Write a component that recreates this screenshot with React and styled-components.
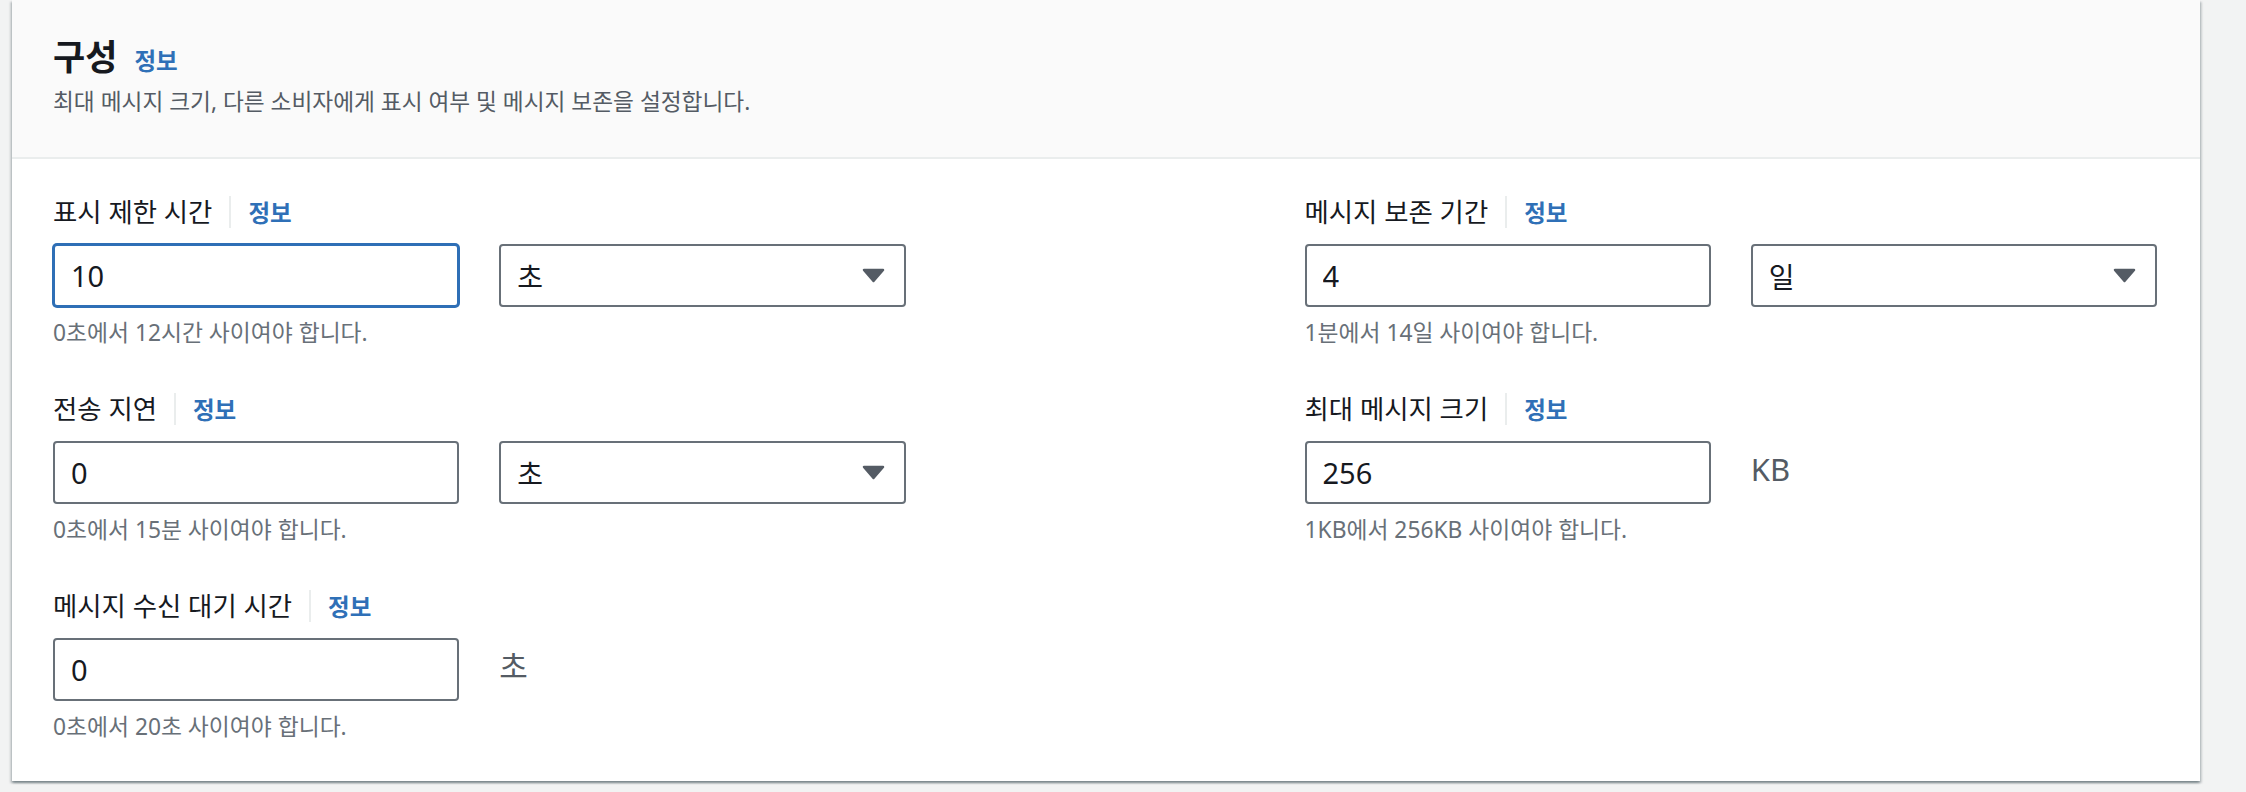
import styled, { createGlobalStyle } from 'styled-components';

const GlobalStyle = createGlobalStyle`
  body {
    margin: 0;
    background: #f2f3f3;
    font-family: "Noto Sans", "Noto Sans CJK KR", sans-serif;
  }
`

const Page = styled.div`
  padding: 0 46px 12px 12px;
`

const Card = styled.section`
  background: #ffffff;
  box-shadow: 0 2px 2px rgba(0, 28, 36, 0.3), 2px 2px 2px rgba(0, 28, 36, 0.15), -2px 2px 2px rgba(0, 28, 36, 0.15);
`

const Header = styled.header`
  background: #fafafa;
  padding: 37px 41px 40px;
  border-bottom: 2px solid #eaeded;
`

const TitleRow = styled.div`
  display: flex;
  align-items: baseline;
  gap: 17px;
`

const Title = styled.h2`
  margin: 0;
  font-size: 35px;
  font-weight: 700;
  line-height: 40px;
  color: #16191f;
`

const InfoLink = styled.a`
  font-size: 23.5px;
  font-weight: 700;
  color: #2f70b7;
  text-decoration: none;
  cursor: pointer;
`

const Description = styled.p`
  margin: 10px 0 0;
  font-size: 22.7px;
  line-height: 30px;
  color: #545b64;
`

const Body = styled.div`
  display: grid;
  grid-template-columns: 1fr 1fr;
  column-gap: 399px;
  row-gap: 45px;
  padding: 36px 43px 40px 41px;
`

const Field = styled.div`
  display: flex;
  flex-direction: column;
`

const LabelRow = styled.div`
  display: flex;
  align-items: center;
  gap: 17px;
  height: 34px;
`

const Label = styled.label`
  font-size: 26.4px;
  line-height: 34px;
  color: #16191f;
`

const Divider = styled.span`
  width: 2px;
  height: 32px;
  background: #eaeded;
`

const Controls = styled.div`
  display: grid;
  grid-template-columns: 1fr 1fr;
  column-gap: 40px;
  margin-top: 15px;
`

const TextInput = styled.input`
  box-sizing: border-box;
  width: 100%;
  height: 63px;
  padding: 0 16px;
  border: 2px solid ${({ $focused }) => ($focused ? '#2f6fb6' : '#687078')};
  border-radius: 4px;
  box-shadow: ${({ $focused }) => ($focused ? '0 0 0 1px #2f6fb6' : 'none')};
  outline: none;
  font-family: inherit;
  font-size: 29px;
  color: #16191f;
  background: #ffffff;
`

const Select = styled.div`
  box-sizing: border-box;
  height: 63px;
  display: flex;
  align-items: center;
  justify-content: space-between;
  padding: 0 19px 0 16px;
  border: 2px solid #687078;
  border-radius: 4px;
  font-size: 28px;
  color: #16191f;
  cursor: pointer;
`

const Unit = styled.span`
  font-size: 31px;
  line-height: 56px;
  color: #545b64;
`

const Helper = styled.div`
  margin-top: 12px;
  font-size: 22.8px;
  line-height: 28px;
  color: #687078;
`

function Caret() {
  return (
    <svg width="23" height="15" viewBox="0 0 23 15">
      <path d="M2 2 H21 L11.5 13 Z" fill="#545b64" stroke="#545b64" strokeWidth="2.5" strokeLinejoin="round" />
    </svg>
  )
}

const fields = [
  { label: '표시 제한 시간', value: '10', select: '초', help: '0초에서 12시간 사이여야 합니다.', focused: true },
  { label: '메시지 보존 기간', value: '4', select: '일', help: '1분에서 14일 사이여야 합니다.' },
  { label: '전송 지연', value: '0', select: '초', help: '0초에서 15분 사이여야 합니다.' },
  { label: '최대 메시지 크기', value: '256', unit: 'KB', help: '1KB에서 256KB 사이여야 합니다.' },
  { label: '메시지 수신 대기 시간', value: '0', unit: '초', help: '0초에서 20초 사이여야 합니다.' },
]

export default function App() {
  return (
    <Page>
      <GlobalStyle />
      <Card>
        <Header>
          <TitleRow>
            <Title>구성</Title>
            <InfoLink>정보</InfoLink>
          </TitleRow>
          <Description>최대 메시지 크기, 다른 소비자에게 표시 여부 및 메시지 보존을 설정합니다.</Description>
        </Header>
        <Body>
          {fields.map((f) => (
            <Field key={f.label}>
              <LabelRow>
                <Label>{f.label}</Label>
                <Divider />
                <InfoLink>정보</InfoLink>
              </LabelRow>
              <Controls>
                <TextInput defaultValue={f.value} $focused={f.focused} />
                {f.select ? (
                  <Select>
                    <span>{f.select}</span>
                    <Caret />
                  </Select>
                ) : (
                  <Unit>{f.unit}</Unit>
                )}
              </Controls>
              <Helper>{f.help}</Helper>
            </Field>
          ))}
        </Body>
      </Card>
    </Page>
  )
}
